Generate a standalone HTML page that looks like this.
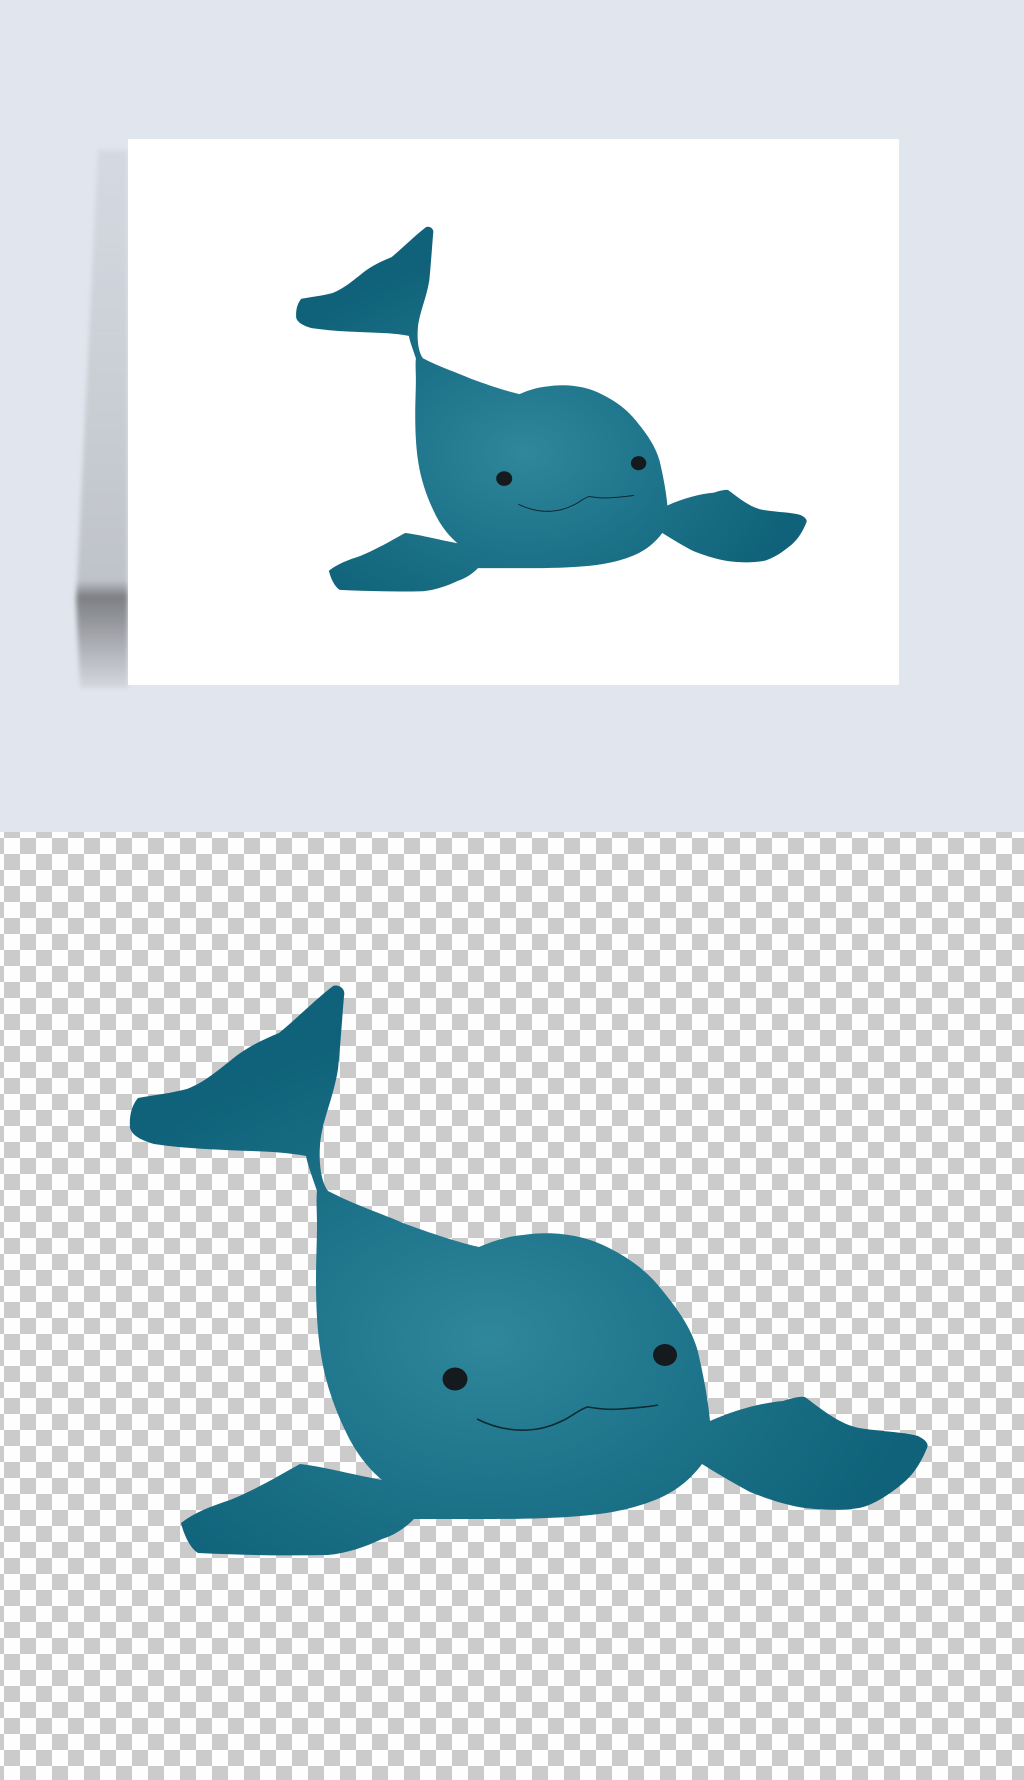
<!DOCTYPE html>
<html><head><meta charset="utf-8"><style>html,body{margin:0;padding:0;width:1024px;height:1780px;overflow:hidden;background:#e1e5ee}svg{display:block}</style></head>
<body>
<svg width="1024" height="1780" viewBox="0 0 1024 1780" xmlns="http://www.w3.org/2000/svg">
<defs>
<pattern id="chk" x="0" y="838" width="32" height="32" patternUnits="userSpaceOnUse">
<rect width="32" height="32" fill="#fefefe"/>
<rect x="20" y="0" width="16" height="16" fill="#cbcbcb"/>
<rect x="-12" y="0" width="16" height="16" fill="#cbcbcb"/>
<rect x="4" y="16" width="16" height="16" fill="#cbcbcb"/>
</pattern>
<radialGradient id="wg" cx="0.45" cy="0.62" r="0.55">
<stop offset="0" stop-color="#2f879c"/>
<stop offset="0.5" stop-color="#1d7389"/>
<stop offset="1" stop-color="#0f6279"/>
</radialGradient>
<linearGradient id="sh" x1="0" y1="0" x2="0" y2="1">
<stop offset="0" stop-color="#c8ccd3" stop-opacity="0.5"/>
<stop offset="0.8" stop-color="#bfc3c9"/>
<stop offset="0.83" stop-color="#7d7f83"/>
<stop offset="1" stop-color="#d5d8df"/>
</linearGradient>
<filter id="bl" x="-50%" y="-20%" width="200%" height="140%"><feGaussianBlur stdDeviation="2.5"/></filter>
<g id="whale">
<path fill="url(#wg)" d="M333,986 C338,984 346,988 344,996 C342,1020 340,1050 338,1069 C333,1100 322,1120 320,1145 C319,1160 320,1180 328,1191 C355,1205 380,1213 403,1223 C430,1233 460,1243 479,1247 C495,1240 510,1236 523,1235 C555,1230 585,1236 605,1246 C630,1258 648,1272 662,1290 C680,1312 692,1330 698,1352 C704,1378 708,1400 710,1421 C735,1410 760,1403 783,1401 C792,1398 800,1396 805,1397 C825,1412 840,1424 859,1428 C885,1432 905,1432 918,1436 C926,1440 929,1444 927,1448 C920,1465 912,1476 902,1484 C885,1498 870,1506 859,1508 C840,1511 822,1510 805,1508 C785,1505 765,1498 750,1492 C735,1484 718,1474 702,1464 C690,1480 675,1492 655,1500 C630,1510 605,1514 580,1516 C545,1519 510,1519 479,1519 C455,1519 432,1519 414,1519 C405,1528 395,1535 382,1539 C365,1547 348,1553 328,1555 C285,1556 240,1555 198,1553 C190,1548 184,1535 181,1523 C195,1512 212,1506 230,1500 C255,1490 280,1475 300,1464 C320,1466 350,1474 382,1480 C368,1468 355,1452 345,1430 C333,1405 325,1380 321,1355 C317,1330 316,1305 316,1280 C316,1260 317,1240 317,1225 C317,1212 316,1200 317,1191 C312,1176 308,1166 306,1156 C295,1154 285,1153 273,1152 C235,1150 195,1150 154,1144 C140,1140 132,1135 130,1128 C129,1115 132,1105 138,1098 C155,1095 172,1093 187,1089 C205,1082 218,1070 230,1061 C245,1048 262,1040 279,1033 C295,1020 315,1000 333,986 Z"/>
<ellipse cx="455" cy="1379" rx="12.5" ry="11.5" fill="#151a1e"/>
<ellipse cx="665" cy="1355" rx="12" ry="11" fill="#151a1e"/>
<path d="M477,1419 C495,1428 512,1431 528,1430 C545,1429 556,1424 566,1419 C575,1414 582,1408 588,1407 C600,1409 610,1410 620,1409 C635,1408 648,1407 658,1405" fill="none" stroke="#0e2a33" stroke-width="1.6"/>
</g>
</defs>
<rect x="0" y="0" width="1024" height="832" fill="#e1e5ee"/>
<polygon points="98,150 128,150 128,688 80,688 76,600" fill="url(#sh)" filter="url(#bl)"/>
<rect x="128" y="139" width="771" height="546" fill="#ffffff"/>
<use href="#whale" transform="translate(213,-404) scale(0.64)"/>
<rect x="0" y="832" width="1024" height="948" fill="url(#chk)"/>
<use href="#whale"/>
</svg>
</body></html>
